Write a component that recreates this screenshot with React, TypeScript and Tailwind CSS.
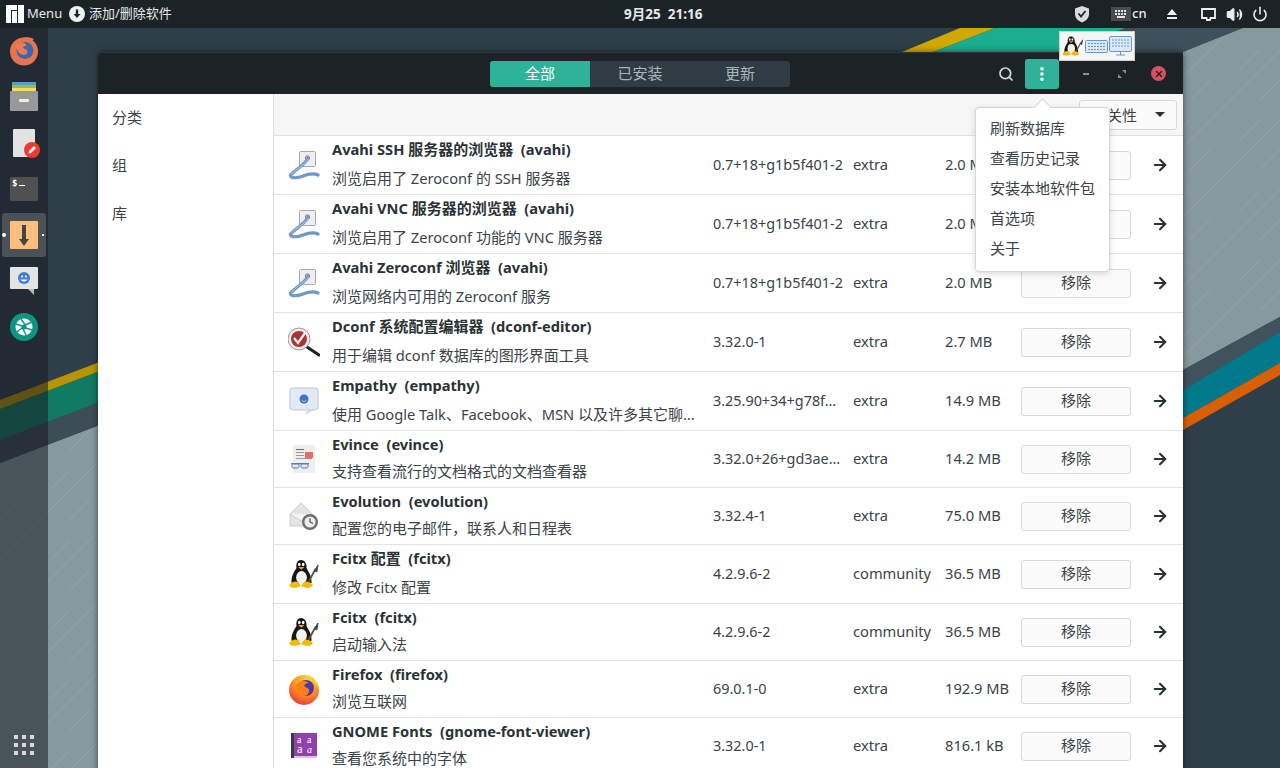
import React from "react";
import { ArrowRight, MoreVertical, Power, Search, Volume2, X } from "lucide-react";

type Row = {
  icon: string;
  title: string;
  desc: string;
  version: string;
  repo: string;
  size: string;
  tall: boolean;
};

const rows: Row[] = [
  { icon: "avahi", title: "Avahi SSH 服务器的浏览器  (avahi)", desc: "浏览启用了 Zeroconf 的 SSH 服务器", version: "0.7+18+g1b5f401-2", repo: "extra", size: "2.0 MB", tall: true },
  { icon: "avahi", title: "Avahi VNC 服务器的浏览器  (avahi)", desc: "浏览启用了 Zeroconf 功能的 VNC 服务器", version: "0.7+18+g1b5f401-2", repo: "extra", size: "2.0 MB", tall: true },
  { icon: "avahi", title: "Avahi Zeroconf 浏览器  (avahi)", desc: "浏览网络内可用的 Zeroconf 服务", version: "0.7+18+g1b5f401-2", repo: "extra", size: "2.0 MB", tall: true },
  { icon: "dconf", title: "Dconf 系统配置编辑器  (dconf-editor)", desc: "用于编辑 dconf 数据库的图形界面工具", version: "3.32.0-1", repo: "extra", size: "2.7 MB", tall: true },
  { icon: "empathy", title: "Empathy  (empathy)", desc: "使用 Google Talk、Facebook、MSN 以及许多其它聊…", version: "3.25.90+34+g78f…", repo: "extra", size: "14.9 MB", tall: true },
  { icon: "evince", title: "Evince  (evince)", desc: "支持查看流行的文档格式的文档查看器", version: "3.32.0+26+gd3ae…", repo: "extra", size: "14.2 MB", tall: false },
  { icon: "evolution", title: "Evolution  (evolution)", desc: "配置您的电子邮件，联系人和日程表", version: "3.32.4-1", repo: "extra", size: "75.0 MB", tall: false },
  { icon: "tux", title: "Fcitx 配置  (fcitx)", desc: "修改 Fcitx 配置", version: "4.2.9.6-2", repo: "community", size: "36.5 MB", tall: true },
  { icon: "tux", title: "Fcitx  (fcitx)", desc: "启动输入法", version: "4.2.9.6-2", repo: "community", size: "36.5 MB", tall: false },
  { icon: "firefox", title: "Firefox  (firefox)", desc: "浏览互联网", version: "69.0.1-0", repo: "extra", size: "192.9 MB", tall: false },
  { icon: "fonts", title: "GNOME Fonts  (gnome-font-viewer)", desc: "查看您系统中的字体", version: "3.32.0-1", repo: "extra", size: "816.1 kB", tall: false },
];

const menuItems = ["刷新数据库", "查看历史记录", "安装本地软件包", "首选项", "关于"];

// CJK runs sit slightly larger than the latin text around them
const Mixed = ({ text }: { text: string }) => (
  <>
    {text.split(/([\u3000-\u9fff\uff00-\uffef]+)/).map((part, i) =>
      i % 2 === 1 ? (
        <span key={i} className="text-[15px]">{part}</span>
      ) : (
        <span key={i}>{part}</span>
      )
    )}
  </>
);

const Tux = () => (
  <>
    <path d="M13 2C9 2 8 6 8.5 10C6 14 3 18 3.5 25L23.5 25C24 18 20 13 18.5 10C19 6 17 2 13 2Z" fill="#161616" />
    <ellipse cx="13.5" cy="19.5" rx="5.4" ry="6.5" fill="#f2f2f2" />
    <ellipse cx="11.3" cy="6.5" rx="1.3" ry="1.7" fill="#fff" />
    <ellipse cx="15.2" cy="6.5" rx="1.3" ry="1.7" fill="#fff" />
    <path d="M10.2 9L16.4 9L13.3 11.8Z" fill="#e8a90c" />
    <path d="M1 27.5C3 24 7 22.5 10 24L13 28C9 30.5 3 30.5 1 27.5Z" fill="#f2b90f" />
    <path d="M25 27.5C23 24 19 22.5 16 24L13 28C17 30.5 23 30.5 25 27.5Z" fill="#f2b90f" />
    <path d="M20.5 24L27.5 11" stroke="#6b4a2a" strokeWidth="1.8" />
    <path d="M26.5 12.5L30 7L28.8 14Z" fill="#444" stroke="#444" />
  </>
);

const AppIcon = ({ name }: { name: string }) => {
  const idBase = "fx-app";
  return (
    <svg width="32" height="32" viewBox="0 0 32 32" className="shrink-0">
      {name === "avahi" && (
        <>
          <rect x="11.5" y="2.5" width="16" height="15" rx="1" fill="#eeeeee" stroke="#a8a8a8" />
          <circle cx="19.5" cy="9" r="2.2" fill="#c9c9c9" stroke="#8a8a8a" />
          <path d="M20 9C18 15 8 20 2.5 26C2 30 10 29 15 27C20 25 26 24 30 26" fill="none" stroke="#7097cb" strokeWidth="3.2" strokeLinecap="round" />
          <path d="M20 10C18 15 8 20 3 25.5" fill="none" stroke="#b5cde9" strokeWidth="0.9" />
        </>
      )}
      {name === "dconf" && (
        <>
          <path d="M19 21L31 29" stroke="#222" strokeWidth="3" strokeLinecap="round" />
          <circle cx="11" cy="13" r="11" fill="#ececec" stroke="#9a9a9a" />
          <circle cx="11" cy="13" r="8" fill="#a83535" />
          <path d="M6 12L10 17L17 7" fill="none" stroke="#fff" strokeWidth="2.2" />
        </>
      )}
      {name === "empathy" && (
        <>
          <rect x="2" y="3" width="28" height="22" rx="3" fill="#e1eaf6" stroke="#bcc9da" />
          <path d="M19 25L26 25L17 30Z" fill="#d5dde8" />
          <circle cx="16" cy="14" r="4.5" fill="#3f74c9" />
          <path d="M13.5 15C14.5 16.8 17.5 16.8 18.5 15" fill="none" stroke="#d6e4fa" strokeWidth="0.8" />
        </>
      )}
      {name === "evince" && (
        <>
          <rect x="5" y="2" width="22" height="28" rx="1" fill="#eeeeee" />
          <rect x="8" y="6" width="8" height="1" fill="#666" />
          <rect x="8" y="9" width="8" height="1" fill="#999" />
          <rect x="8" y="12" width="8" height="1" fill="#999" />
          <rect x="8" y="15" width="16" height="1" fill="#999" />
          <rect x="17" y="9" width="8" height="6" fill="#ee6b5f" />
          <rect x="3" y="20" width="18" height="1.4" fill="#5a7fa8" />
          <rect x="4" y="21" width="7" height="4" rx="1.5" fill="#dfe8f2" stroke="#5a7fa8" />
          <rect x="13" y="21" width="7" height="4" rx="1.5" fill="#dfe8f2" stroke="#5a7fa8" />
        </>
      )}
      {name === "evolution" && (
        <>
          <path d="M2 14L13 3L24 14L24 26L2 26Z" fill="#e4e4e4" stroke="#d0d0d0" />
          <path d="M2 14L13 21L24 14" fill="#f4f4f4" stroke="#cfcfcf" />
          <circle cx="22" cy="22" r="8" fill="#6d6d78" />
          <circle cx="22" cy="22" r="5.6" fill="#ecebe6" />
          <path d="M22 18.5L22 22L25 23.5" fill="none" stroke="#444" strokeWidth="1.2" />
        </>
      )}
      {name === "tux" && <Tux />}
      {name === "firefox" && (
        <>
          <defs>
            <radialGradient id={idBase} cx="0.6" cy="0.2" r="0.9">
              <stop offset="0" stopColor="#ffd93b" />
              <stop offset="0.45" stopColor="#ff9a1f" />
              <stop offset="1" stopColor="#e92b3c" />
            </radialGradient>
          </defs>
          <circle cx="16" cy="17" r="15" fill={`url(#${idBase})`} />
          <path d="M20 2C26 4 31 10 31 17C29 11 25 8 20 7Z" fill="#ffd02e" />
          <circle cx="18" cy="15" r="8" fill="#4b3aa6" />
          <path d="M8 12C11 7 18 7 21 10C18 10 15 12 17 14C21 15 23 18 19 22C14 25 7 21 8 12Z" fill="#ff7f1c" />
        </>
      )}
      {name === "fonts" && (
        <>
          <rect x="3" y="3" width="26" height="25" fill="#9141ac" />
          <rect x="3" y="3" width="3" height="25" fill="#3a3a44" />
          <rect x="6" y="26" width="23" height="2" fill="#d9c3e2" />
          <text x="9" y="13" fontSize="10" fill="#fff" fontFamily="Liberation Serif, serif">a</text>
          <text x="19" y="13" fontSize="10" fill="#fff" fontFamily="Liberation Serif, serif">a</text>
          <text x="9" y="23" fontSize="10" fill="#fff" fontFamily="Noto Sans, sans-serif">a</text>
          <text x="19" y="23" fontSize="10" fill="#fff" fontStyle="italic" fontFamily="Liberation Serif, serif">a</text>
        </>
      )}
    </svg>
  );
};

const AppRow = ({ row }: { row: Row }) => (
  <div className={`flex items-center border-b border-[#e3e3e3] text-[#3a4347] ${row.tall ? "h-[59px]" : "h-[57px]"}`}>
    <div className="w-[58px] pl-[14px] shrink-0">
      <AppIcon name={row.icon} />
    </div>
    <div className="w-[381px] h-full shrink-0 flex flex-col justify-between pb-[2px]">
      <div className="h-[26px] leading-[26px] font-bold text-[#2b3235] whitespace-pre">
        <Mixed text={row.title} />
      </div>
      <div className="h-[28px] leading-[28px] whitespace-nowrap">
        <Mixed text={row.desc} />
      </div>
    </div>
    <div className="w-[140px] shrink-0 whitespace-nowrap text-[14.4px]">{row.version}</div>
    <div className="w-[92px] shrink-0 pb-[2px]">{row.repo}</div>
    <div className="w-[76px] shrink-0 whitespace-nowrap pb-[2px]">{row.size}</div>
    <button className="w-[110px] h-[29px] shrink-0 rounded-[3px] border border-[#d8d8d8] bg-[#fbfbfb] text-[#3a4347] text-[15px] pb-[2px]">移除</button>
    <div className="ml-[20px] text-[#2b3235]">
      <ArrowRight size={18} strokeWidth={2.8} />
    </div>
  </div>
);

const DockIcon = ({ children }: { children: React.ReactNode }) => (
  <div className="h-[46px] flex items-center justify-center">
    <svg width="32" height="32" viewBox="0 0 32 32">
      {children}
    </svg>
  </div>
);

const Dock = () => (
  <div className="w-[48px] shrink-0 flex flex-col bg-[#171c20]/[0.55] relative">
    <DockIcon>
      <circle cx="16" cy="16.5" r="14" fill="#e8734f" />
      <path d="M9 6C12 2 21 1 26 4L23 7C18 5 13 5 9 6Z" fill="#e8734f" />
      <circle cx="17" cy="15.5" r="8.5" fill="#3c66ad" />
      <path d="M8 9C13 6 19 8 18 11C15 11 14 13 17 14C21 15 20 20 16 20C13 20 8 17 8 9Z" fill="#ea7a55" />
    </DockIcon>
    <DockIcon>
      <rect x="4" y="1" width="24" height="3" fill="#5b9bd5" />
      <rect x="4" y="4" width="24" height="3" fill="#8bc34a" />
      <rect x="4" y="7" width="24" height="3.5" fill="#fdd36b" />
      <rect x="2" y="10" width="28" height="20" rx="1" fill="#999999" />
      <rect x="11" y="18" width="10" height="3" rx="1" fill="#eeeeee" />
    </DockIcon>
    <DockIcon>
      <rect x="5" y="2" width="22" height="28" rx="1" fill="#e3e3e3" />
      <circle cx="24" cy="23" r="8" fill="#ee3a32" />
      <path d="M20.5 26.5L21 24L26 19L28 21L23 26Z" fill="#fff" />
    </DockIcon>
    <DockIcon>
      <rect x="2" y="4" width="28" height="24" rx="1" fill="#505050" />
      <text x="4" y="13" fontSize="9" fontWeight="700" fill="#fff" fontFamily="DejaVu Sans Mono, monospace">$</text>
      <rect x="11" y="12" width="6" height="1" fill="#fff" />
    </DockIcon>
    <div className="h-[46px] flex items-center justify-center relative">
      <div className="absolute left-[2px] top-[1px] w-[44px] h-[44px] rounded-[3px] bg-[#4a5257]" />
      <div className="absolute left-[2px] top-[21px] w-[4px] h-[4px] rounded-full bg-white" />
      <div className="absolute left-[42px] top-[22px] w-[2px] h-[2px] bg-white" />
      <svg width="32" height="32" viewBox="0 0 32 32" className="relative">
        <rect x="2" y="2" width="28" height="28" rx="1" fill="#fdbe7e" />
        <rect x="14" y="6" width="4" height="15" fill="#444444" />
        <path d="M11 20L21 20L16 27Z" fill="#444444" />
      </svg>
    </div>
    <DockIcon>
      <rect x="2" y="2" width="28" height="22" rx="1" fill="#e4e4e4" />
      <path d="M20 24L26 24L26 30Z" fill="#b8b8b8" />
      <circle cx="16" cy="13" r="6" fill="#3f7fd6" />
      <circle cx="14" cy="11.5" r="1" fill="#fff" />
      <circle cx="18" cy="11.5" r="1" fill="#fff" />
      <path d="M12.5 14.5C14 17 18 17 19.5 14.5Z" fill="#fff" />
    </DockIcon>
    <DockIcon>
      <circle cx="16" cy="16" r="14" fill="#0e9582" />
      <circle cx="16" cy="16" r="8.5" fill="#fff" />
      <g stroke="#0e9582" strokeWidth="1.4">
        <path d="M13 8L18 15" />
        <path d="M24 11L17 14" />
        <path d="M24 19L18 17" />
        <path d="M18 24L15 18" />
        <path d="M9 21L14 17" />
        <path d="M8 13L14 15" />
      </g>
      <circle cx="16" cy="16" r="2.6" fill="#0e9582" />
    </DockIcon>
    <div className="absolute left-[14px] bottom-[13px] grid grid-cols-3 gap-[4px]">
      {[0, 1, 2, 3, 4, 5, 6, 7, 8].map((i) => (
        <div key={i} className="w-[4px] h-[4px] bg-[#d6d9da]" />
      ))}
    </div>
  </div>
);

const TopBar = () => (
  <div className="h-[28px] shrink-0 bg-[#1c2326] flex items-center text-[13px] text-[#e6e9ea] relative">
    <svg width="18" height="18" viewBox="0 0 18 18" className="ml-[6px]">
      <path d="M0 0H11V5H5V18H0ZM6 6H11V18H6ZM12 0H18V18H12Z" fill="#fff" />
    </svg>
    <span className="ml-[3px] w-[42px]">Menu</span>
    <svg width="16" height="16" viewBox="0 0 16 16">
      <circle cx="8" cy="8" r="8" fill="#f0f0f0" />
      <rect x="6.8" y="3.5" width="2.4" height="5.5" fill="#222" />
      <path d="M4.5 8H11.5L8 12Z" fill="#222" />
    </svg>
    <span className="ml-[4px]">添加/删除软件</span>
    <div className="absolute left-[624px] top-0 h-full flex items-center font-bold text-[13.5px] whitespace-pre">9月25  21:16</div>
    <div className="ml-auto flex items-center">
      <svg width="16" height="18" viewBox="0 0 16 18">
        <path d="M8 1L15 3.5V9C15 13 12 16 8 17.5C4 16 1 13 1 9V3.5Z" fill="#dcdcdc" />
        <path d="M4.5 8.5L7 11.5L11.5 6" fill="none" stroke="#1c2326" strokeWidth="1.8" />
      </svg>
      <svg width="20" height="14" viewBox="0 0 20 14" className="ml-[21px]">
        <rect width="20" height="14" fill="#4b4b4b" />
        <path d="M4 4H16M4 7H16" stroke="#e2e2e2" strokeWidth="2" strokeDasharray="2 1" />
        <path d="M6 10H14" stroke="#e2e2e2" strokeWidth="2" />
      </svg>
      <span className="ml-[1px] w-[37px] font-medium">cn</span>
      <svg width="12" height="12" viewBox="0 0 12 12" className="-ml-[3px]">
        <path d="M6 1L11 7H1Z M1 9H11V11H1Z" fill="#eeeeee" />
      </svg>
      <svg width="15" height="13" viewBox="0 0 15 13" className="ml-[23px]">
        <path d="M1 1H14V10H9.5L9 12H6L5.5 10H1Z" fill="none" stroke="#eeeeee" strokeWidth="1.8" />
      </svg>
      <Volume2 size={17} className="ml-[10px]" fill="#eeeeee" />
      <Power size={16} className="ml-[9px] mr-[12px]" strokeWidth={2.4} />
    </div>
  </div>
);

const Wallpaper = () => (
  <svg className="absolute inset-0" width="1280" height="768" viewBox="0 0 1280 768">
    <defs>
      <pattern id="scratches" width="70" height="70" patternUnits="userSpaceOnUse">
        <path d="M0 70L70 0M-20 50L20 10M30 90L90 30" stroke="#ffffff" strokeOpacity="0.1" strokeWidth="1" />
      </pattern>
    </defs>
    <rect width="1280" height="768" fill="#2f3f49" />
    <path d="M0 463L110 421V768H0Z" fill="#86999f" />
    <path d="M0 463L110 421V768H0Z" fill="url(#scratches)" />
    <path d="M0 440L110 398L110 421L0 463Z" fill="#3c4d57" />
    <path d="M0 409L110 367L110 398L0 440Z" fill="#117a62" />
    <path d="M0 400L110 358L110 367L0 409Z" fill="#b89400" />
    <path d="M933 52L995 28H1243L1183 52Z" fill="#3e505b" />
    <path d="M902 52L960 28H995L933 52Z" fill="#d2a800" />
    <path d="M933 52L995 28H1125L1065 52Z" fill="#1aad8e" />
    <path d="M1183 52L1243 28H1280V317L1183 370Z" fill="#86999f" />
    <path d="M1183 52L1243 28H1280V317L1183 370Z" fill="url(#scratches)" />
    <path d="M1183 370L1280 317V332L1183 390Z" fill="#40535d" />
    <path d="M1183 390L1280 332V363L1183 418Z" fill="#007a8a" />
    <path d="M1183 418L1280 363V375L1183 430Z" fill="#da5f00" />
  </svg>
);

const Window = () => (
  <div className="absolute left-[50px] top-[24px] w-[1085px] h-[740px] flex flex-col rounded-t-[4px] shadow-[0_0_6px_rgba(0,0,0,0.55)]">
    <div className="h-[42px] shrink-0 bg-[#1c2326] rounded-t-[4px] border-t border-[#2e3639] flex items-center relative text-[15px]">
      <div className="ml-[392px] w-[300px] h-[26px] rounded-[3px] bg-[#2f3c43] flex text-center leading-[24px] text-[#a9b4b9]">
        <div className="w-[100px] rounded-l-[3px] bg-[#2eb398] text-white">全部</div>
        <div className="w-[100px]">已安装</div>
        <div className="w-[100px]">更新</div>
      </div>
      <Search size={16} strokeWidth={2.6} className="ml-[208px] text-[#d4d7d8]" />
      <div className="ml-[11px] w-[34px] h-[30px] rounded-[3px] bg-[#2eb398] flex items-center justify-center text-white">
        <MoreVertical size={18} strokeWidth={2.8} />
      </div>
      <div className="ml-[24px] w-[6px] h-[2px] bg-[#8a9094]" />
      <svg width="8" height="8" viewBox="0 0 8 8" className="ml-[29px]">
        <path d="M4 0H8V4ZM0 4V8H4Z" fill="#8a9094" />
      </svg>
      <div className="ml-[25px] w-[15px] h-[15px] rounded-full bg-[#d8505c] flex items-center justify-center text-[#2b1b1e]">
        <X size={10} strokeWidth={3.4} />
      </div>
    </div>
    <div className="flex-1 flex bg-white min-h-0">
      <div className="w-[176px] shrink-0 border-r border-[#dedede] text-[#3a4347] text-[15px]">
        <div className="h-[48px] pl-[14px] leading-[47px]">分类</div>
        <div className="h-[48px] pl-[14px] leading-[47px]">组</div>
        <div className="h-[48px] pl-[14px] leading-[47px]">库</div>
      </div>
      <div className="flex-1 min-w-0 flex flex-col">
        <div className="h-[42px] shrink-0 bg-[#f6f6f6] border-b border-[#e0e0e0] flex items-center justify-end pr-[6px]">
          <div className="w-[98px] h-[30px] rounded-[3px] border border-[#d8d8d8] bg-[#fbfbfb] flex items-center pl-[12px] text-[#3a4347] text-[15px]">
            <span className="leading-[28px]">相关性</span>
            <div className="ml-[18px] w-0 h-0 border-l-[5px] border-r-[5px] border-t-[5px] border-l-transparent border-r-transparent border-t-[#2b3235]" />
          </div>
        </div>
        {rows.map((row) => (
          <AppRow key={row.title} row={row} />
        ))}
      </div>
    </div>
    {/* popover */}
    <div className="absolute left-[877px] top-[55px] w-[135px] h-[165px] bg-white border border-[#d6d6d6] rounded-[4px] shadow-[0_2px_6px_rgba(0,0,0,0.15)] py-[5px] pl-[14px] text-[#3a4347] text-[15px]">
      <div className="absolute left-[60px] -top-[7px] w-[13px] h-[13px] rotate-45 bg-white border-l border-t border-[#d6d6d6]" />
      {menuItems.map((item) => (
        <div key={item} className="relative h-[30px] leading-[30px]">{item}</div>
      ))}
    </div>
  </div>
);

export default function App() {
  return (
    <div className="relative w-[1280px] h-[768px] overflow-hidden flex flex-col font-['Noto_Sans','Noto_Sans_CJK_SC',sans-serif] text-[14.67px]">
      <Wallpaper />
      <TopBar />
      <div className="flex-1 flex relative min-h-0">
        <Dock />
        <div className="flex-1 relative">
          <Window />
        </div>
      </div>
      {/* fcitx tray popup */}
      <div className="absolute left-[1059px] top-[31px] w-[76px] h-[30px] bg-[#f5f5f5] border border-[#cfcfcf] flex items-center gap-[1px] pl-[2px]">
        <svg width="22" height="22" viewBox="0 0 32 32"><Tux /></svg>
        <svg width="23" height="13" viewBox="0 0 23 13">
          <rect x="0.5" y="0.5" width="22" height="12" rx="1" fill="#dbe9f7" stroke="#5f9ad6" />
          <path d="M3 3.5H20M3 6.5H20M3 9.5H20" stroke="#5f9ad6" strokeDasharray="2 1" />
        </svg>
        <svg width="23" height="20" viewBox="0 0 23 20">
          <rect x="0.5" y="0.5" width="22" height="15" rx="1.5" fill="#dbe9f7" stroke="#5f9ad6" />
          <path d="M3 4H20M3 7H20M3 10H20" stroke="#5f9ad6" strokeDasharray="2 1" />
          <path d="M7 19H16M11.5 16V19" stroke="#5f9ad6" />
        </svg>
      </div>
    </div>
  );
}
